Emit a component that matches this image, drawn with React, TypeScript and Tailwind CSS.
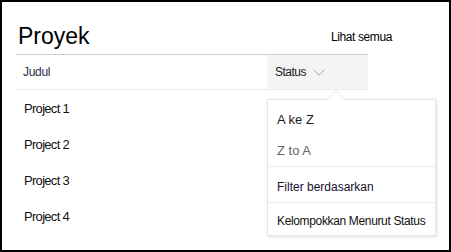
import React from "react";

const font = { fontFamily: '"Liberation Sans", Arial, sans-serif' };

export default function App() {
  const projects = ["Project 1", "Project 2", "Project 3", "Project 4"];
  return (
    <div
      className="relative w-[451px] h-[252px] border-2 border-black bg-white overflow-hidden text-[#252525]"
      style={font}
    >
      {/* top row */}
      <div className="flex items-start h-[52px] pl-[14px]">
        <div className="w-[315px] pl-[2px] pt-[20px] text-[23px] leading-[28px] text-black">Proyek</div>
        <div className="pt-[28px] text-[12px] leading-[14px] tracking-[-0.4px] text-black">Lihat semua</div>
      </div>

      {/* table */}
      <div className="ml-[14px] w-[352px]">
        <div className="flex h-[36px] border-t border-b border-t-[#cfcfcf] border-b-[#ebebeb]">
          <div className="w-[251px] flex items-center pl-[7px] text-[12px] leading-none tracking-[-0.3px] text-[#1f2f4a]">
            Judul
          </div>
          <div className="flex-1 bg-[#f4f4f4] flex items-center pl-[8px] text-[12px] leading-none tracking-[-0.5px] text-[#1a1a1a]">
            Status
            <svg className="ml-[7px]" width="12" height="7" viewBox="0 0 12 7">
              <path d="M0.5 0.8 L6 6 L11.5 0.8" fill="none" stroke="#a6a6a6" strokeWidth="1" />
            </svg>
          </div>
        </div>
        <div className="flex flex-col">
          {projects.map((p) => (
            <div key={p} className="h-[36px] flex items-center pl-[8px] text-[13px] leading-none tracking-[-0.7px] text-[#111]">
              {p}
            </div>
          ))}
        </div>
      </div>

      {/* dropdown */}
      <div className="absolute left-[265px] top-[97px] w-[169px] bg-white border border-[#e6e6e6] shadow-[1px_1px_3px_rgba(0,0,0,0.12)] text-[12px] leading-none">
        <svg className="absolute left-[57px] top-[-10px]" width="22" height="11" viewBox="0 0 22 11">
          <path d="M0 10.5 L11 0.5 L22 10.5" fill="white" stroke="#e6e6e6" strokeWidth="1" />
          <rect x="0" y="10" width="22" height="2" fill="white" />
        </svg>
        <div className="pt-[4px] border-b border-[#ececec]">
          <div className="h-[31px] flex items-center pl-[9px] text-[13px] text-[#1a1a1a]">A ke Z</div>
          <div className="h-[31px] flex items-center pl-[9px] text-[13px] text-[#666]">Z to A</div>
        </div>
        <div className="pt-[5px] border-b border-[#ececec]">
          <div className="h-[30px] flex items-center pl-[9px] text-[#1a1030]">Filter berdasarkan</div>
        </div>
        <div className="pt-[4px]">
          <div className="h-[28px] flex items-center pl-[9px] tracking-[-0.35px] text-[#111]">Kelompokkan Menurut Status</div>
        </div>
      </div>
    </div>
  );
}
